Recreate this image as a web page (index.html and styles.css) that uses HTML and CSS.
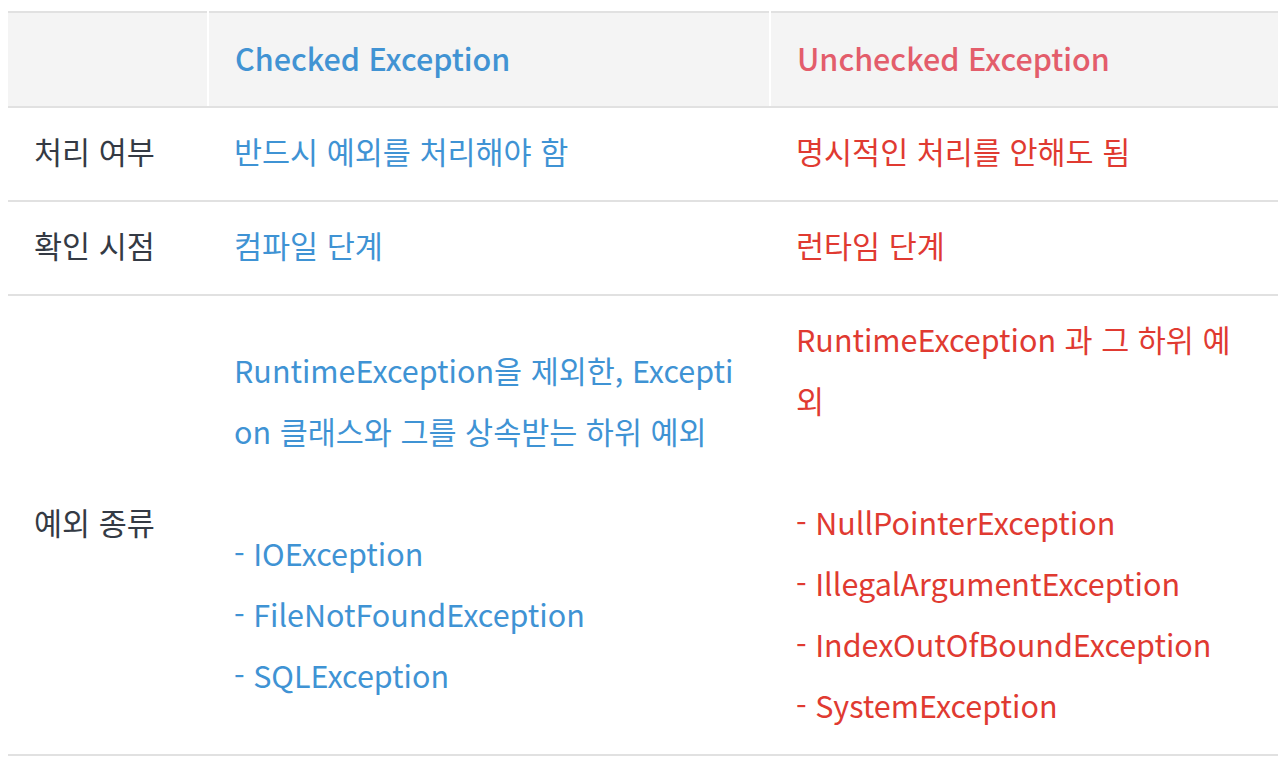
FILE: index.html
```html
<!DOCTYPE html>
<html lang="ko">
<head>
<meta charset="utf-8">
<link rel="stylesheet" href="styles.css">
</head>
<body>
<table class="cmp">
  <colgroup>
    <col class="c1">
    <col class="c2">
    <col class="c3">
  </colgroup>
  <thead>
    <tr>
      <th></th>
      <th class="checked-h">Checked Exception</th>
      <th class="unchecked-h">Unchecked Exception</th>
    </tr>
  </thead>
  <tbody>
    <tr>
      <td class="label">처리 여부</td>
      <td class="checked">반드시 예외를 처리해야 함</td>
      <td class="unchecked">명시적인 처리를 안해도 됨</td>
    </tr>
    <tr>
      <td class="label">확인 시점</td>
      <td class="checked">컴파일 단계</td>
      <td class="unchecked">런타임 단계</td>
    </tr>
    <tr>
      <td class="label">예외 종류</td>
      <td class="checked">RuntimeException을 제외한, Exception 클래스와 그를 상속받는 하위 예외<br><br>- IOException<br>- FileNotFoundException<br>- SQLException</td>
      <td class="unchecked">RuntimeException 과 그 하위 예외<br><br>- NullPointerException<br>- IllegalArgumentException<br>- IndexOutOfBoundException<br>- SystemException</td>
    </tr>
  </tbody>
</table>
</body>
</html>
```
FILE: styles.css
```css
html, body {
  background: #ffffff;
}
body {
  margin: 8px;
  font-family: "Noto Sans CJK KR", "Noto Sans", sans-serif;
  color: #333840;
}
.cmp {
  width: 100%;
  margin-top: 3px;
  border-collapse: collapse;
  border-top: 2px solid #e1e1e1;
  table-layout: fixed;
  font-size: 30.5px;
  line-height: 61px;
}
.c1 { width: 200px; }
.c2 { width: 562px; }
.c3 { width: auto; }
.cmp th,
.cmp td {
  padding: 13px 26px 18px;
  text-align: left;
  vertical-align: middle;
  word-break: break-all;
  border-bottom: 2px solid #e1e1e1;
}
.cmp th {
  padding-top: 15px;
  padding-bottom: 17px;
  background: #f4f4f4;
  font-weight: 500;
  border-left: 2px solid #ffffff;
}
.cmp th:first-child {
  border-left: none;
}
.checked-h { color: #4193d3; }
.unchecked-h { color: #e35d6b; }
.label { color: #343a44; }
.checked { color: #3f93d4; }
.unchecked { color: #e03a31; }
```
